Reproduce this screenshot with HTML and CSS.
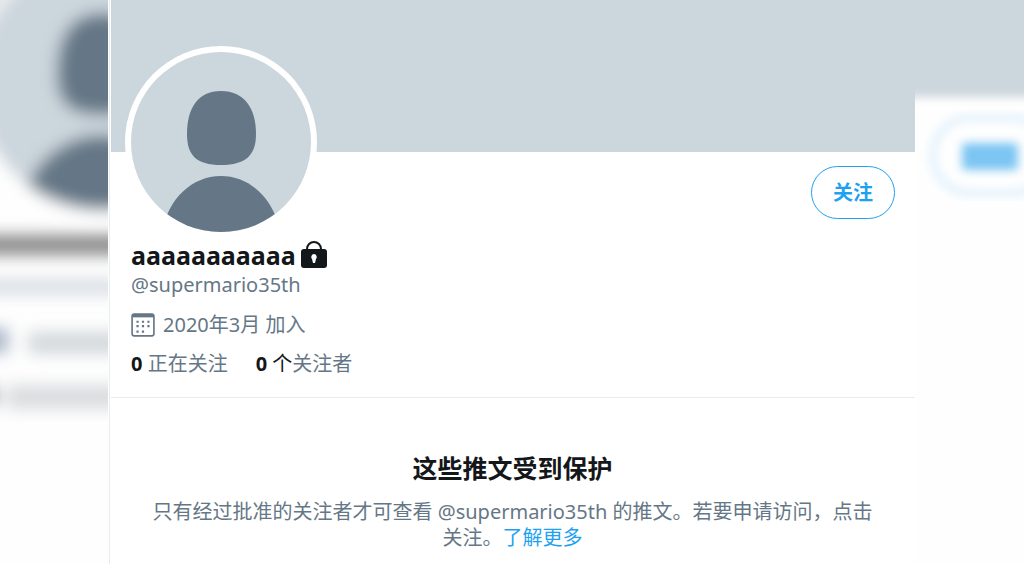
FILE: index.html
```html
<!DOCTYPE html>
<html lang="zh-CN">
<head>
<meta charset="utf-8">
<meta name="viewport" content="width=device-width, initial-scale=1">
<title>aaaaaaaaaaa (@supermario35th)</title>
<link rel="stylesheet" href="styles.css">
</head>
<body>
<div class="stage">
  <svg class="backdrop" viewBox="0 0 1024 564" preserveAspectRatio="none" aria-hidden="true">
    <defs>
      <filter id="soft" x="-10%" y="-10%" width="120%" height="120%"><feGaussianBlur stdDeviation="8"/></filter>
      <filter id="mild" x="-10%" y="-10%" width="120%" height="120%"><feGaussianBlur stdDeviation="5"/></filter>
      <clipPath id="bigClip"><circle cx="103" cy="83" r="127"/></clipPath>
    </defs>
    <rect width="1024" height="564" fill="#fefefe"/>
    <g filter="url(#mild)">
      <rect x="-60" y="-60" width="1160" height="157" fill="#ccd6dd"/>
      <rect x="962" y="143" width="56" height="27" rx="4" fill="#7cc5f3"/>
    </g>
    <g filter="url(#soft)">
      <circle cx="103" cy="83" r="131" fill="none" stroke="#fff" stroke-width="8"/>
      <g clip-path="url(#bigClip)">
        <rect x="-30" y="-50" width="270" height="270" fill="#ccd6dd"/>
        <path fill="#657786" d="M103 13C70 13 57 38 57 74C57 104 70 115 103 115C138 115 151 104 151 74C151 38 136 13 103 13Z"/>
        <ellipse cx="103" cy="219" rx="82" ry="84" fill="#657786"/>
      </g>
      <rect x="-30" y="235" width="240" height="20" fill="#888"/>
      <rect x="-30" y="279" width="240" height="16" fill="#d8dee4"/>
      <rect x="-30" y="328" width="38" height="25" fill="#a9b5c8"/>
      <rect x="28" y="332" width="170" height="22" fill="#d3d8db"/>
      <rect x="-30" y="387" width="25" height="18" fill="#777"/>
      <rect x="6" y="385" width="180" height="24" fill="#d9dcde"/>
    </g>
    <g filter="url(#mild)">
      <rect x="933" y="118" width="117" height="75" rx="37" fill="none" stroke="#e4f3fd" stroke-width="8"/>
    </g>
  </svg>
  <main class="profile">
    <div class="banner"></div>
    <section class="card">
      <div class="top">
        <svg class="avatar" viewBox="0 0 192 192" role="img" aria-label="头像">
          <defs><clipPath id="face"><circle cx="96" cy="96" r="90"/></clipPath></defs>
          <circle cx="96" cy="96" r="96" fill="#fff"/>
          <circle cx="96" cy="96" r="90" fill="#ccd6dd"/>
          <g clip-path="url(#face)" fill="#657786">
            <path d="M96 45C73 45 62 62 62 88C62 109 71 119 96 119C121 119 131 109 131 88C131 62 119 45 96 45Z"/>
            <path d="M36 192C40 156 65 130 96 130S152 156 156 192Z"/>
          </g>
        </svg>
        <button class="follow" type="button">关注</button>
      </div>
      <h1 class="name">aaaaaaaaaaa
        <svg class="lock" viewBox="0 0 28 28" role="img" aria-label="受保护">
          <path d="M7 9V8a7 7 0 0 1 14 0v1" fill="none" stroke="#14171a" stroke-width="2"/>
          <rect x="1" y="8" width="26" height="19" rx="3" fill="#14171a"/>
          <path d="M14 13a3 3 0 0 0-2 5l1 4h2l1-4a3 3 0 0 0-2-5Z" fill="#fff"/>
        </svg>
      </h1>
      <p class="handle">@supermario35th</p>
      <p class="joined">
        <svg class="calendar" viewBox="0 0 22 22" aria-hidden="true">
          <rect x="1" y="1" width="20" height="20" rx="2" fill="none" stroke="#657786" stroke-width="1.5"/>
          <path d="M1 1h20v3H1Z" fill="#657786"/>
          <g fill="#657786"><path d="M5 7h2v2H5zM10 7h2v2h-2zM15 7h2v2h-2zM5 11h2v2H5zM10 11h2v2h-2zM15 11h2v2h-2zM5 16h2v2H5zM10 16h2v2h-2z"/></g>
        </svg>
        <span>2020年3月 加入</span>
      </p>
      <p class="counts">
        <span><b>0</b> 正在关注</span>
        <span><b>0</b> <span class="dark">个</span>关注者</span>
      </p>
    </section>
    <section class="notice">
      <h2 class="title">这些推文受到保护</h2>
      <p class="message">只有经过批准的关注者才可查看 @supermario35th 的推文。若要申请访问，点击关注。<a class="more" href="#more">了解更多</a></p>
    </section>
  </main>
</div>
</body>
</html>
```
FILE: styles.css
```css
* { box-sizing: border-box; }
body {
  margin: 0;
  font-family: "Noto Sans", "Noto Sans CJK SC", sans-serif;
  font-size: 20px;
  line-height: 26px;
  color: #657786;
  background: #fff;
}
h1, h2, p { margin: 0; }
.stage {
  position: relative;
  display: grid;
  grid-template-columns: 108px minmax(0, 1fr) 109px;
  min-height: 100vh;
  overflow: hidden;
}
.backdrop {
  position: absolute;
  inset: 0;
  width: 100%;
  height: 100%;
}
.profile {
  position: relative;
  grid-column: 2;
  padding-left: 2px;
  background: linear-gradient(90deg, #fff 1px, #e6ecf0 1px, #e6ecf0 2px, #fff 2px);
}
.banner {
  height: 152px;
  margin-left: 1px;
  background: #ccd6dd;
}
.card {
  margin-left: 1px;
  padding: 0 20px 20px;
  border-bottom: 1px solid #e6ecf0;
}
.top {
  display: flex;
  justify-content: space-between;
  align-items: flex-end;
  margin: -106px 0 0 -6px;
}
.avatar { width: 192px; height: 192px; }
.follow {
  width: 84px;
  height: 53px;
  margin-bottom: 19px;
  border: 1px solid #1da1f2;
  border-radius: 27px;
  background: #fff;
  color: #1da1f2;
  font: inherit;
  font-weight: 700;
}
.name {
  display: flex;
  align-items: center;
  gap: 4px;
  font-size: 25px;
  line-height: 34px;
  color: #14171a;
}
.lock { width: 28px; height: 28px; }
.joined {
  display: flex;
  align-items: center;
  gap: 8px;
  margin: 14px 0 13px;
}
.calendar { width: 24px; height: 24px; }
.counts { display: flex; gap: 28px; }
.counts b, .dark { color: #14171a; }
.notice {
  padding: 53px 36px 12px;
  text-align: center;
}
.title {
  margin-bottom: 14px;
  font-size: 25px;
  line-height: 34px;
  color: #14171a;
}
.message { padding: 0 4px; }
.more { color: #1da1f2; text-decoration: none; }
```
